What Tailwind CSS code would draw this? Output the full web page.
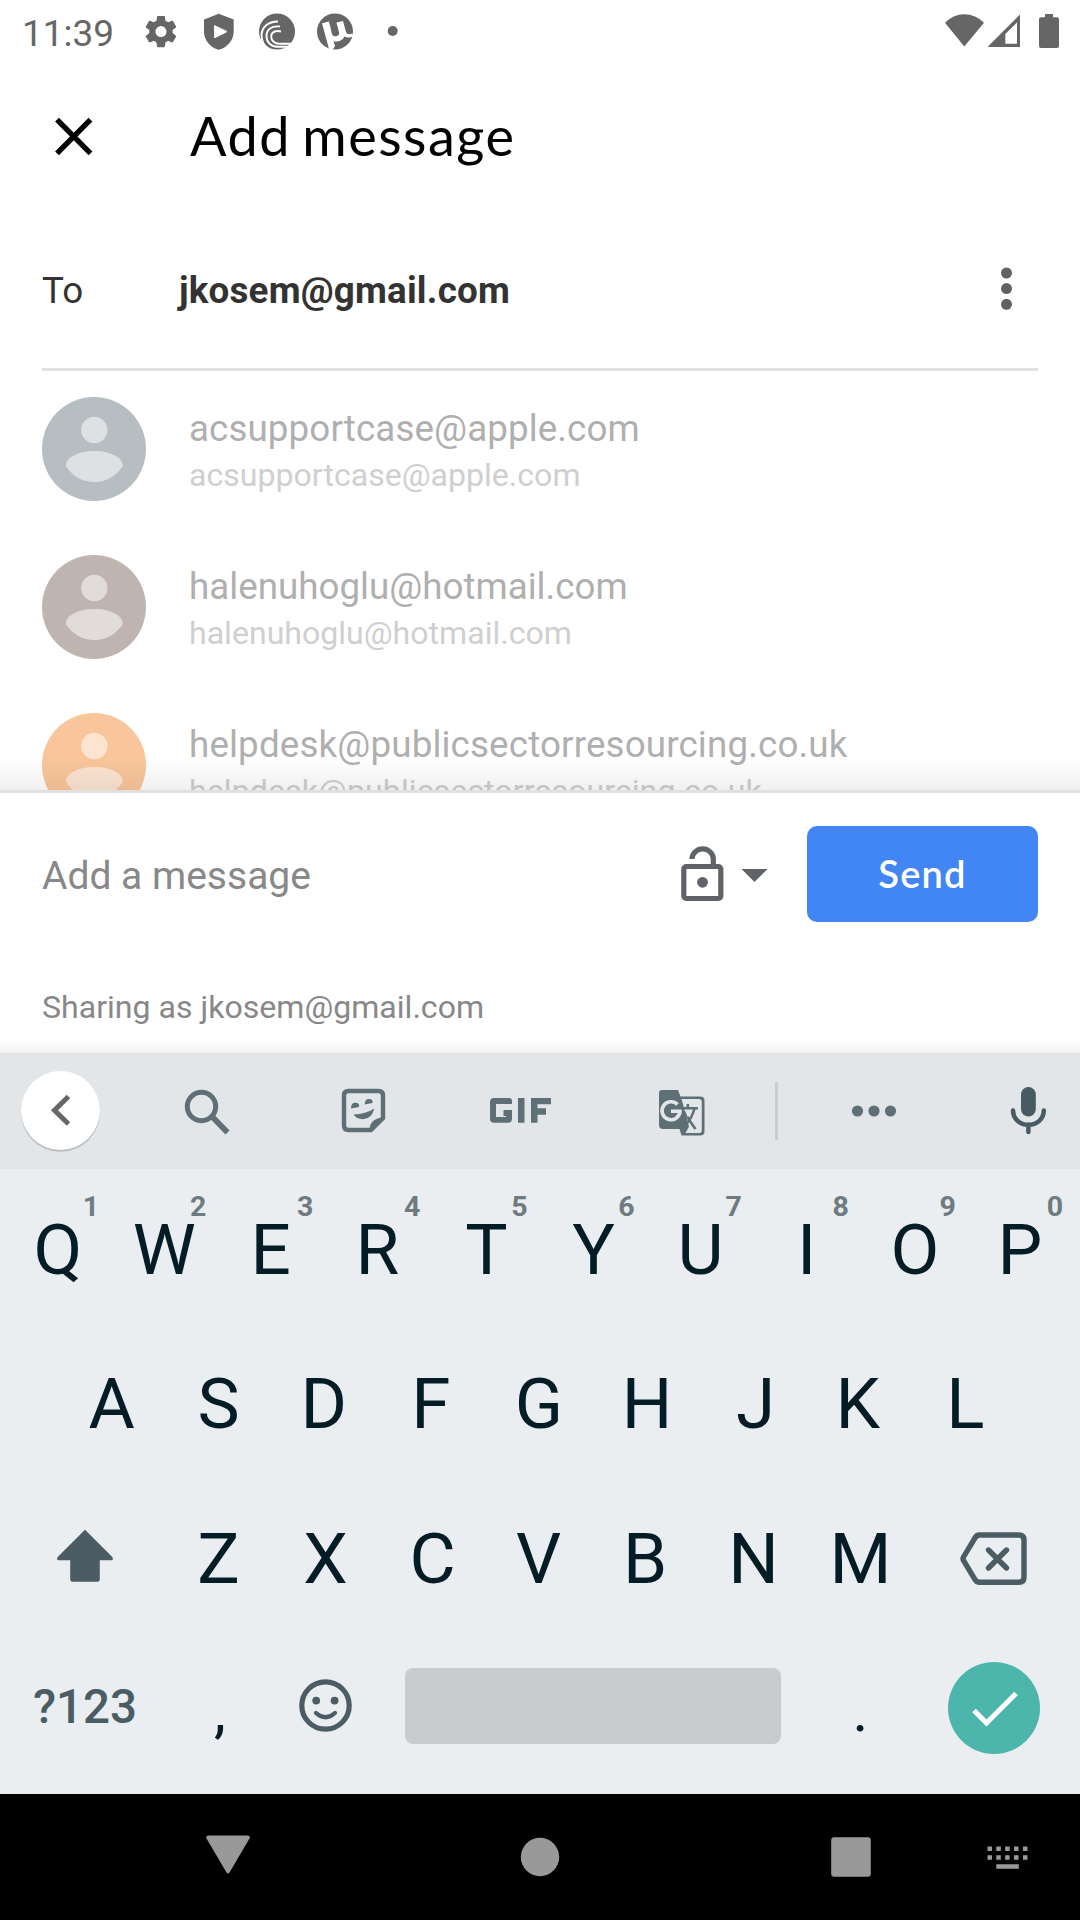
<!DOCTYPE html>
<html lang="en">
<head>
<meta charset="utf-8">
<title>Add message</title>
<script src="https://cdn.jsdelivr.net/npm/@tailwindcss/browser@4"></script>
</head>
<body class="w-[1080px] h-[1920px] overflow-hidden bg-white font-['Roboto',sans-serif] flex flex-col">

<!-- status bar -->
<header class="h-[63px] shrink-0 flex items-start justify-between text-[#666]">
  <div class="flex">
    <span class="w-[142px] pl-[22px] pt-[12px] text-[37px] leading-[44px] whitespace-nowrap">11:39</span>
    <svg class="w-[278px] h-[63px]" viewBox="142 0 278 63" fill="#666">
      <path transform="translate(141.4 12) scale(1.63)" d="M19.14 12.94c.04-.3.06-.61.06-.94 0-.32-.02-.64-.07-.94l2.03-1.58a.49.49 0 0 0 .12-.61l-1.92-3.32a.488.488 0 0 0-.59-.22l-2.39.96c-.5-.38-1.03-.7-1.62-.94l-.36-2.54a.484.484 0 0 0-.48-.41h-3.84c-.24 0-.43.17-.47.41l-.36 2.54c-.59.24-1.13.57-1.62.94l-2.39-.96c-.22-.08-.47 0-.59.22L2.74 8.87c-.12.21-.08.47.12.61l2.03 1.58c-.05.3-.09.63-.09.94s.02.64.07.94l-2.03 1.58a.49.49 0 0 0-.12.61l1.92 3.32c.12.22.37.29.59.22l2.39-.96c.5.38 1.03.7 1.62.94l.36 2.54c.05.24.24.41.48.41h3.84c.24 0 .44-.17.47-.41l.36-2.54c.59-.24 1.13-.56 1.62-.94l2.39.96c.22.08.47 0 .59-.22l1.92-3.32c.12-.22.07-.47-.12-.61l-2.01-1.58zM12 15.4a3.400 3.400 0 1 1 0-6.800 3.400 3.400 0 0 1 0 6.800z"/>
      <path fill-rule="evenodd" d="M218.800 13.700 233.700 19.400V31.500C233.700 40 227.500 47.700 218.800 49.800 210.100 47.700 204 40 204 31.500V19.400ZM214.800 25.200Q214 24.800 214 26V37Q214 38.500 215.200 37.900L226.300 32.600Q227.600 31.700 226.300 30.800Z"/>
      <circle cx="277" cy="31.500" r="18"/>
      <g fill="none" stroke="#fff" stroke-width="1.900">
        <path d="M278 21.500C268 21.500 262 27 261.500 35C261.500 41 264 46 269 49"/>
        <path d="M280 26.500C271 25.500 266.500 30 266.500 36C266.500 42 271 46.800 277 46.800H291"/>
        <path d="M281 31.500C275 30 271.200 32.500 271.200 36.500C271.200 41 275 43.800 279 43.800H294"/>
      </g>
      <circle cx="335" cy="31.500" r="18"/>
      <path fill="#fff" d="M322 23.300 329 21.500 332 34C333 37.500 340 37 339 32.500L336.500 22.500 343 20.900 346 32Q347 35.500 352.500 33.500L353 36Q349 38.500 346 37L344.500 36.500Q342 41.500 336 41.500L333.500 41.500 335 46Q333 49.500 332 50.500L329.500 51Z"/>
      <circle cx="392.700" cy="31" r="5"/>
    </svg>
  </div>
  <svg class="w-[150px] h-[63px]" viewBox="930 0 150 63" fill="#666">
    <path d="M945 22.800Q953 14.200 964.300 14.200T984 22.800L964.300 46.500Z"/>
    <path fill-rule="evenodd" d="M1020 14.500V47H987.500ZM1017 22.500 1005.300 34V43.700H1017Z"/>
    <path d="M1045 14H1053V17.300H1057Q1059 17.300 1059 19.300V46Q1059 48 1057 48H1041Q1039 48 1039 46V19.300Q1039 17.300 1041 17.300H1045Z"/>
  </svg>
</header>

<!-- title -->
<div class="h-[147px] shrink-0 flex items-center">
  <svg class="w-[190px] h-[147px] shrink-0" viewBox="0 63 190 147"><path d="M57 119.700 90.500 153.300M90.500 119.700 57 153.300" stroke="#000" stroke-width="5.400" fill="none"/></svg>
  <h1 class="pb-[1px] font-['Lato','Roboto',sans-serif] text-[54px] leading-[64px] tracking-[1.500px] [word-spacing:-4px] text-black whitespace-nowrap">Add message</h1>
</div>

<!-- recipient -->
<div class="h-[161px] mx-[42px] shrink-0 flex border-b-[3px] border-[#e0e0e0] text-[36.750px] leading-[44px] text-[#333] pt-[55px]">
  <span class="w-[137px] pt-[4px]">To</span>
  <span class="flex-1 pt-[4px] font-bold tracking-[0.2px]">jkosem@gmail.com</span>
  <svg class="w-[64px] h-[48px]" viewBox="974 265 64 48" fill="#616161"><circle cx="1006.500" cy="273" r="5.500"/><circle cx="1006.500" cy="288.600" r="5.500"/><circle cx="1006.500" cy="304.300" r="5.500"/></svg>
</div>

<!-- suggestions -->
<ul class="h-[419px] shrink-0 overflow-hidden relative pt-[26px] pl-[42px]">
  <li class="h-[158px] flex">
    <svg class="w-[104px] h-[104px] shrink-0" viewBox="0 0 104 104"><circle cx="52" cy="52" r="52" fill="#b6bec1"/><g fill="#dde1e4"><circle cx="52.300" cy="33" r="13.200"/><path d="M23.800 69C23.800 60 37 54 52.300 54S80.800 60 80.800 69Q70 85 52.300 85T23.800 69Z"/></g></svg>
    <div class="pl-[43px] pt-[9px] whitespace-nowrap"><p class="text-[36.750px] leading-[46px] tracking-[0.1px] text-[#afafaf]">acsupportcase@apple.com</p><p class="text-[32.100px] leading-[46px] text-[#cfcfcf]">acsupportcase@apple.com</p></div>
  </li>
  <li class="h-[158px] flex">
    <svg class="w-[104px] h-[104px] shrink-0" viewBox="0 0 104 104"><circle cx="52" cy="52" r="52" fill="#bfb4b0"/><g fill="#e1dcda"><circle cx="52.300" cy="33" r="13.200"/><path d="M23.800 69C23.800 60 37 54 52.300 54S80.800 60 80.800 69Q70 85 52.300 85T23.800 69Z"/></g></svg>
    <div class="pl-[43px] pt-[9px] whitespace-nowrap"><p class="text-[36.750px] leading-[46px] text-[#afafaf]">halenuhoglu@hotmail.com</p><p class="text-[32.100px] leading-[46px] text-[#cfcfcf]">halenuhoglu@hotmail.com</p></div>
  </li>
  <li class="h-[158px] flex">
    <svg class="w-[104px] h-[104px] shrink-0" viewBox="0 0 104 104"><circle cx="52" cy="52" r="52" fill="#f9c69b"/><g fill="#fce4d1"><circle cx="52.300" cy="33" r="13.200"/><path d="M23.800 69C23.800 60 37 54 52.300 54S80.800 60 80.800 69Q70 85 52.300 85T23.800 69Z"/></g></svg>
    <div class="pl-[43px] pt-[9px] whitespace-nowrap"><p class="text-[36.750px] leading-[46px] tracking-[0.150px] text-[#afafaf]">helpdesk@publicsectorresourcing.co.uk</p><p class="text-[32.100px] leading-[46px] tracking-[0.080px] text-[#cfcfcf]">helpdesk@publicsectorresourcing.co.uk</p></div>
  </li>
  <li class="absolute inset-x-0 bottom-0 h-[34px] bg-linear-to-b from-transparent to-black/6"></li>
</ul>

<!-- composer -->
<section class="h-[263px] shrink-0 border-t-[3px] border-[#e0e0e0] flex flex-col">
  <div class="h-[162px] pl-[42px] pr-[42px] pt-[33px] flex">
    <span class="w-[628px] pt-[27px] text-[39px] leading-[46px] text-[#888]">Add a message</span>
    <svg class="w-[137px] h-[96px]" viewBox="670 826 137 96">
      <rect x="683.800" y="866.500" width="37" height="32" rx="2.500" fill="none" stroke="#5f6368" stroke-width="5.200"/>
      <path d="M692 859V858.500A10.700 10.700 0 0 1 713.300 858.500V866" fill="none" stroke="#5f6368" stroke-width="5.200"/>
      <circle cx="702.500" cy="882.300" r="5.400" fill="#5f6368"/>
      <path d="M741.500 869H767.600L754.500 882Z" fill="#5f6368"/>
    </svg>
    <button class="w-[231px] h-[96px] pb-[2px] rounded-[10px] bg-[#4285f4] text-white font-['Lato','Roboto',sans-serif] text-[38px] font-semibold tracking-[1.2px]">Send</button>
  </div>
  <p class="px-[42px] pt-[33px] text-[32.100px] leading-[38px] text-[#888]">Sharing as jkosem@gmail.com</p>
  <div class="mt-auto h-[14px] bg-linear-to-b from-transparent to-black/5"></div>
</section>

<!-- keyboard -->
<section class="h-[741px] shrink-0 bg-[#eaeef1] flex flex-col text-[#041c26]">
  <div class="h-[116px] shrink-0 bg-[#e2e6e9] flex">
    <svg class="w-[1080px] h-[116px]" viewBox="0 1053 1080 116" fill="#5f6f76">
      <ellipse cx="60.500" cy="1112" rx="39.600" ry="39.800" fill="#b9bbbd"/>
      <circle cx="60.500" cy="1110.500" r="39.500" fill="#fff"/>
      <path d="M68.500 1096.500 54.500 1110.300 68.500 1124" fill="none" stroke="#666" stroke-width="5"/>
      <circle cx="201.500" cy="1106.500" r="14.200" fill="none" stroke="#5f6f76" stroke-width="5"/>
      <path d="M213 1117.500 227.500 1132.500" stroke="#5f6f76" stroke-width="5.800"/>
      <path d="M348.500 1091H378.500Q383 1091 383 1095.500V1118L371 1130H348.500Q344 1130 344 1125.500V1095.500Q344 1091 348.500 1091Z" fill="none" stroke="#5f6f76" stroke-width="4.400"/>
      <path d="M369.500 1131.500Q369 1118 384 1117.500ZM353.500 1114.500Q366 1114 374.200 1108.500Q372 1119 363 1119.200Q356.500 1119 353.500 1114.500ZM351 1108.500Q351 1102.500 355.500 1102.700T359 1107ZM364.700 1104.600Q364.700 1099 369 1099T372.500 1103Z"/>
      <path d="M495 1098H509Q512 1098 512 1101V1104H496V1117H506V1116H503.500V1110H512V1119Q512 1122.700 508 1122.700H494Q490 1122.700 490 1119V1102Q490 1098 494 1098ZM518 1098H524.500V1122.700H518ZM531 1098H551V1104.200H537.500V1108.300H546V1114.700H537.500V1122.700H531Z"/>
      <path d="M662 1090H678L680.500 1096.500H700Q704.500 1096.500 704.500 1100.500V1131.500Q704.500 1135.500 700 1135.500H681.500L679.500 1129H663Q659 1129 659 1125V1093Q659 1090 662 1090ZM681.500 1099 689 1126.500 685.500 1133H699.500Q701.800 1133 701.800 1130.500V1101.500Q701.800 1099 699.500 1099Z" fill-rule="evenodd"/>
      <path d="M677.500 1104.500A9 9 0 1 0 680 1111.300H671" fill="none" stroke="#e2e6e9" stroke-width="3.600"/>
      <g fill="none" stroke-width="2.600"><path stroke="#5f6f76" d="M681 1108.300H698M687.800 1104V1108M694.500 1108.500Q692 1118 685.500 1125M684.500 1111Q688 1119 695.500 1129"/></g>
      <path d="M684.700 1110H691L688 1117.500Z" fill="#e2e6e9"/>
      <path d="M775 1082H778V1140H775Z" fill="#cacdd0"/>
      <circle cx="857.500" cy="1111" r="5.600"/><circle cx="874" cy="1111" r="5.600"/><circle cx="890.500" cy="1111" r="5.600"/>
      <g fill="#485a62"><rect x="1021" y="1087" width="14.800" height="29.500" rx="7.400"/><path d="M1013 1110.500C1013 1119 1020 1124.800 1028.400 1124.800S1043.800 1119 1043.800 1110.500M1028.400 1124.500V1132" fill="none" stroke="#485a62" stroke-width="4.500" stroke-linecap="round"/></g>
    </svg>
  </div>

  <div class="h-[155px] shrink-0 pt-[39px] px-[4.500px] grid grid-cols-10 text-center text-[71px] leading-[84px] [&>span]:relative [&_i]:absolute [&_i]:not-italic [&_i]:font-bold [&_i]:text-[28.500px] [&_i]:leading-[34px] [&_i]:left-[78px] [&_i]:w-[17px] [&_i]:top-[-18px] [&_i]:text-[#6e7b80]">
    <span>Q<i>1</i></span><span class="pr-[2px]">W<i>2</i></span><span class="pr-[3px]">E<i>3</i></span><span class="pr-[4px]">R<i>4</i></span><span>T<i>5</i></span><span>Y<i>6</i></span><span>U<i>7</i></span><span class="pr-[2px]">I<i>8</i></span><span>O<i>9</i></span><span class="pr-[4px]">P<i>0</i></span>
  </div>
  <div class="h-[154px] shrink-0 pt-[38px] px-[58px] grid grid-cols-9 text-center text-[71px] leading-[84px]">
    <span>A</span><span>S</span><span class="pr-[4px]">D</span><span class="pr-[4px]">F</span><span class="pr-[2px]">G</span><span>H</span><span class="pl-[3px]">J</span><span class="pr-[7px]">K</span><span class="pr-[6px]">L</span>
  </div>
  <div class="h-[154px] shrink-0 flex">
    <svg class="w-[165px] h-[154px]" viewBox="0 1478 165 154"><path d="M85 1529.800 112.300 1557Q114 1560.300 111 1560.300H99.800V1579.500Q99.800 1581.800 97.500 1581.800H72.500Q70.200 1581.800 70.200 1579.500V1560.300H59Q56 1560.300 57.700 1557Z" fill="#4b5c64"/></svg>
    <div class="w-[749px] pt-[39px] grid grid-cols-7 text-center text-[71px] leading-[84px]">
      <span>Z</span><span>X</span><span>C</span><span class="pr-[2px]">V</span><span class="pr-[3px]">B</span><span>N</span><span>M</span>
    </div>
    <svg class="w-[166px] h-[154px]" viewBox="914 1478 166 154" fill="none" stroke="#4b5c64" stroke-width="5.400"><path d="M979.500 1535H1019Q1024 1535 1024 1540V1577Q1024 1582.300 1019 1582.300H979.500Q976.500 1582.300 975 1579.500L963.500 1560.500Q962.500 1558.700 963.500 1557L975 1538Q976.500 1535 979.500 1535Z"/><path d="M988.500 1550 1006.500 1568M1006.500 1550 988.500 1568" stroke-linecap="round"/></svg>
  </div>
  <div class="h-[162px] shrink-0 flex">
    <span class="w-[168px] pl-[2px] pt-[47px] text-center text-[47.500px] leading-[56px] font-medium text-[#4b5c64]">?123</span>
    <span class="w-[104px] pt-[48px] text-center text-[60px] leading-[62px]">,</span>
    <svg class="w-[133px] h-[162px]" viewBox="272 1632 133 162" fill="#4b5c64"><circle cx="325.500" cy="1705.500" r="23.700" fill="none" stroke="#4b5c64" stroke-width="5.200"/><circle cx="316.200" cy="1700.600" r="3.900"/><circle cx="334.600" cy="1700.600" r="3.900"/><path d="M316 1713Q325.500 1721.500 335 1713" fill="none" stroke="#4b5c64" stroke-width="4.200" stroke-linecap="round"/></svg>
    <span class="mt-[36px] w-[376px] h-[76px] rounded-[8px] bg-[#c8cccf]"></span>
    <span class="w-[159px] pt-[48px] text-center text-[60px] leading-[62px]">.</span>
    <svg class="w-[140px] h-[162px]" viewBox="940 1632 140 162"><circle cx="994" cy="1708" r="46" fill="#4cb6ac"/><path d="M974 1710.500 986.500 1723 1016 1693.500" fill="none" stroke="#fff" stroke-width="5"/></svg>
  </div>
</section>

<!-- navigation bar -->
<nav class="h-[126px] shrink-0 bg-black">
  <svg class="w-[1080px] h-[126px]" viewBox="0 1794 1080 126" fill="#999">
    <path d="M208 1835.500H248Q250.500 1836 249.500 1838.500L229.500 1872.500Q228 1874.500 226.500 1872.500L206.500 1838.500Q205.500 1836 208 1835.500Z"/>
    <circle cx="540" cy="1857" r="19.200"/>
    <rect x="831.200" y="1837.200" width="39.600" height="39.600" rx="3"/>
    <path d="M987.500 1846.500h4.500v4.500h-4.500zM996.300 1846.500h4.500v4.500h-4.500zM1005.100 1846.500h4.500v4.500h-4.500zM1014 1846.500h4.500v4.500h-4.500zM1023 1846.500h4.500v4.500h-4.500zM987.500 1855.200h4.500v4.500h-4.500zM996.300 1855.200h4.500v4.500h-4.500zM1005.100 1855.200h4.500v4.500h-4.500zM1014 1855.200h4.500v4.500h-4.500zM1023 1855.200h4.500v4.500h-4.500zM996.300 1864.200h22.500v4.500h-22.500z"/>
  </svg>
</nav>
</body>
</html>
